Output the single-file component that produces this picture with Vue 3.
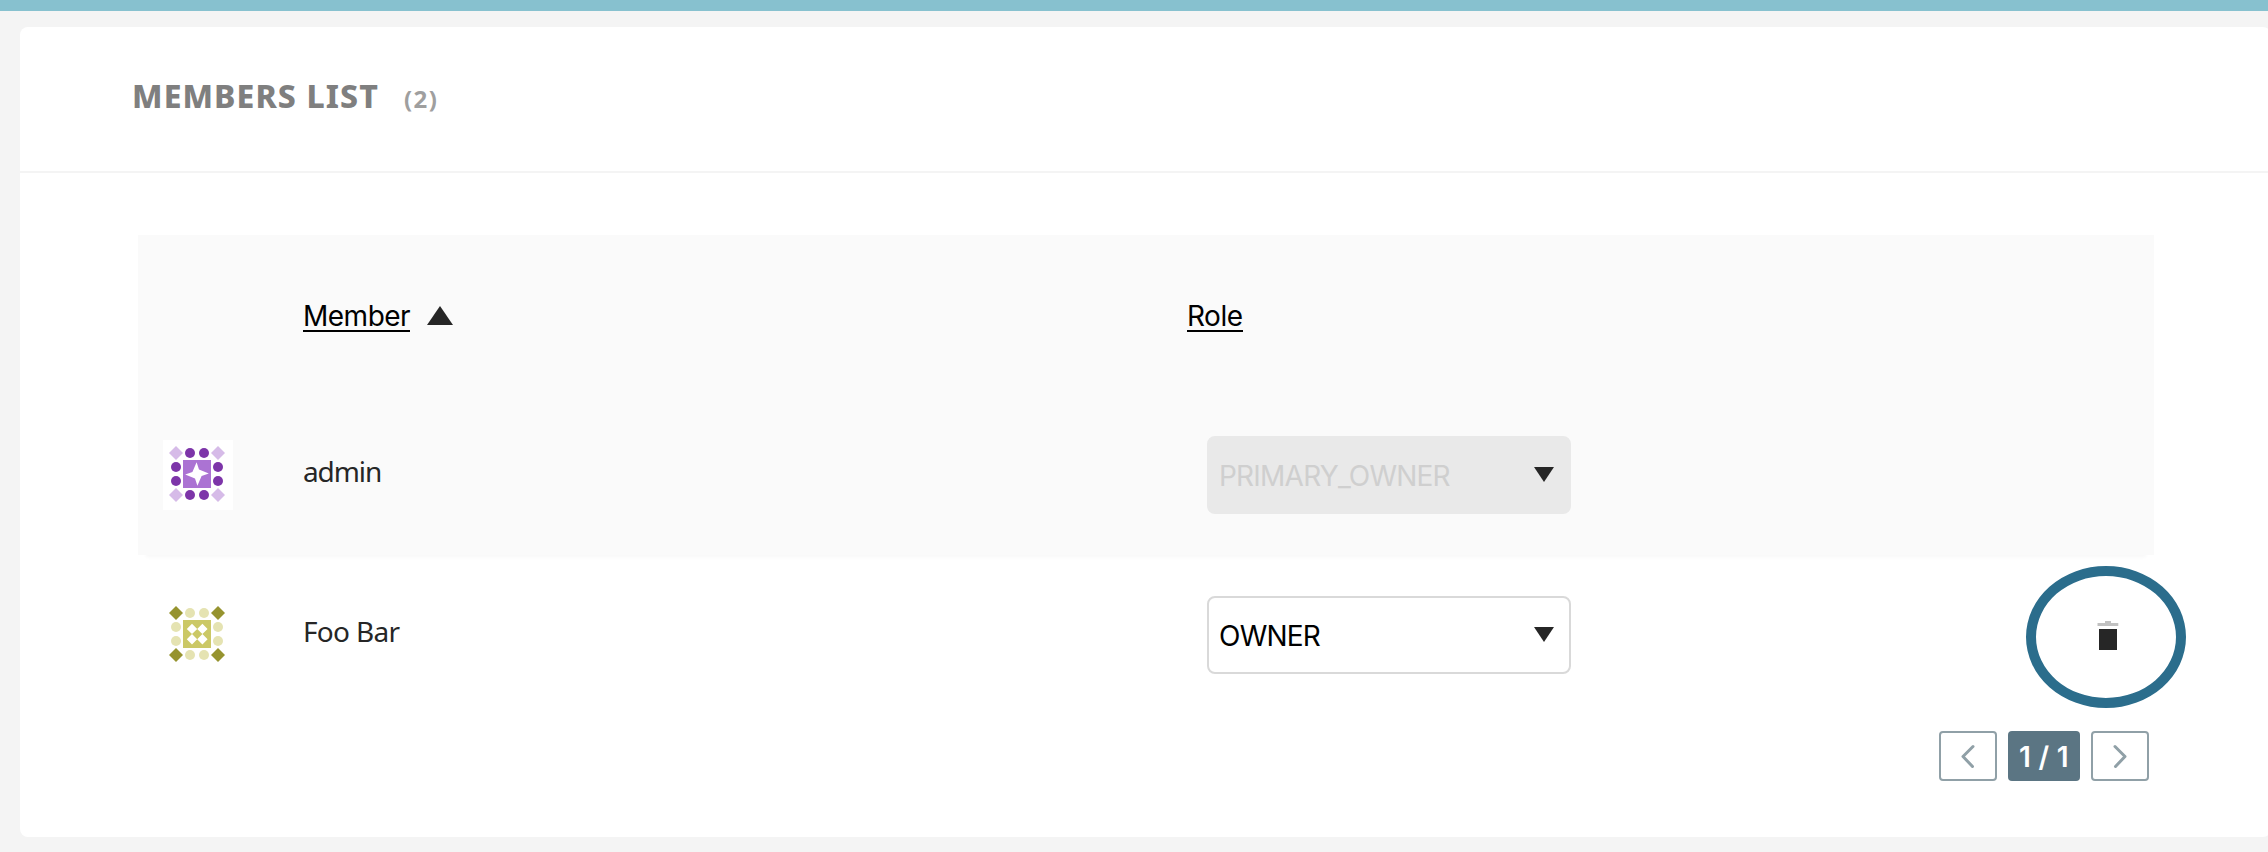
<script setup>
const corners = [[13, 13], [55, 13], [13, 55], [55, 55]]
const dots = [[27, 13], [41, 13], [27, 55], [41, 55], [13, 27], [13, 41], [55, 27], [55, 41]]
const members = [
  {
    name: 'admin', role: 'PRIMARY_OWNER', locked: true,
    corner: '#d6bbe8', dot: '#7d35a9', center: '#ab73d3',
    shape: 'M33.6 22.2 36 29.4 45.8 33.6 38.6 36 34.4 45.8 32 38.6 22.2 34.4 29.4 32Z',
  },
  {
    name: 'Foo Bar', role: 'OWNER', locked: false,
    corner: '#96932f', dot: '#e5e3b2', center: '#cbc866',
    shape: 'M29 23.700l5.200 5.200-5.200 5.200-5.200-5.200zM39.400 23.700l5.200 5.200-5.200 5.200-5.200-5.200zM29 34.100l5.200 5.200-5.200 5.200-5.200-5.200zM39.400 34.100l5.200 5.200-5.200 5.200-5.200-5.200z',
  },
]
</script>

<template>
  <div class="page">
    <div class="topbar"></div>
    <main class="card">
      <header class="card-header">
        <h1 class="title">MEMBERS LIST</h1>
        <span class="count">(2)</span>
      </header>
      <section class="table">
        <div class="row head">
          <div></div>
          <div class="sort">
            <a class="link member">Member</a>
            <svg class="up" width="26" height="19" viewBox="0 0 26 19"><path d="M0 19 13 0 26 19Z" fill="#262626" /></svg>
          </div>
          <div class="sort"><a class="link role">Role</a></div>
          <div></div>
        </div>
        <div v-for="m in members" :key="m.name" class="row" :class="{ shaded: m.locked }">
          <svg class="avatar" width="70" height="70" viewBox="0 0 70 70">
            <rect width="70" height="70" fill="#fff" />
            <path v-for="([x, y], i) in corners" :key="'c' + i" :d="`M${x} ${y - 7}l7 7-7 7-7-7z`" :fill="m.corner" />
            <circle v-for="([x, y], i) in dots" :key="'d' + i" :cx="x" :cy="y" r="5" :fill="m.dot" />
            <rect x="20" y="20" width="28" height="28" :fill="m.center" />
            <path :d="m.shape" fill="#fff" />
          </svg>
          <div class="name" :class="{ tight: m.locked }">{{ m.name }}</div>
          <div class="select" :class="{ locked: m.locked }">
            <span>{{ m.role }}</span>
            <svg width="20" height="15" viewBox="0 0 20 15"><path d="M0 0H20L10 15Z" fill="#262626" /></svg>
          </div>
          <div class="actions">
            <div v-if="!m.locked" class="ring">
              <svg width="22" height="29" viewBox="0 0 22 29">
                <path d="M8 0h6v2h7.3v3H.5V2H8z" fill="#c1c1c1" />
                <path d="M2 8h18v21H2z" fill="#262626" />
              </svg>
            </div>
          </div>
        </div>
      </section>
      <nav class="pager">
        <button class="btn"><svg width="58" height="50" viewBox="0 0 58 50"><path d="M34 15.500 24 25.500 33.500 35.500" /></svg></button>
        <span class="current">1 / 1</span>
        <button class="btn"><svg width="58" height="50" viewBox="0 0 58 50"><path d="M24 15.500 34 25.500 24.500 35.500" /></svg></button>
      </nav>
    </main>
  </div>
</template>

<style>
body { margin: 0; }
</style>

<style scoped>
.page {
  width: 2268px;
  height: 852px;
  overflow: hidden;
  background: #f4f4f4;
  font-family: Inter, "Liberation Sans", sans-serif;
  font-size: 28px;
  color: #262626;
}
.topbar { height: 11px; background: #87c1cf; }
.card {
  box-sizing: border-box;
  width: 2251px;
  height: 810px;
  margin: 16px 0 0 20px;
  background: #fff;
  border-radius: 8px;
}
.card-header {
  display: flex;
  align-items: baseline;
  box-sizing: border-box;
  height: 146px;
  padding: 45px 0 0 112px;
  border-bottom: 2px solid #f4f4f4;
  font-family: "Noto Sans", sans-serif;
  white-space: nowrap;
}
.title { margin: 0; width: 272px; font-size: 32px; font-weight: 800; line-height: 48px; letter-spacing: 1.1px; color: #7f7f7f; }
.count { font-size: 24px; font-weight: 700; letter-spacing: 1.4px; color: #9f9f9f; }
.table { width: 2016px; margin: 62px 0 0 118px; }
.row {
  display: grid;
  grid-template-columns: 165px 884px 380px 1fr;
  align-items: center;
  height: 160px;
}
.head, .shaded { background: #fafafa; }
.shaded { box-shadow: 0 10px 4px -8px rgba(0, 0, 0, .035); }
.sort { display: flex; align-items: center; height: 34px; }
.link { box-sizing: border-box; height: 34px; line-height: 36px; border-bottom: 2px solid #000; color: #000; letter-spacing: -.5px; white-space: nowrap; }
.member { width: 107px; }
.role { width: 56px; }
.up { margin-left: 17px; margin-top: 1px; }
.avatar { display: block; margin-left: 25px; }
.name { font-family: "Noto Sans", sans-serif; line-height: 40px; padding-bottom: 8px; letter-spacing: -.7px; }
.tight { letter-spacing: -1.1px; }
.select {
  display: flex;
  justify-content: space-between;
  align-items: center;
  box-sizing: border-box;
  width: 364px;
  height: 78px;
  margin-left: 20px;
  padding: 0 15px 2px 10px;
  border: 2px solid #d9d9d9;
  border-radius: 8px;
  background: #fff;
  color: #000;
  letter-spacing: -.78px;
}
.select span { position: relative; top: 2px; }
.locked { background: #e9e9e9; border-color: #e9e9e9; color: #cfcfcf; }
.actions { display: flex; justify-content: flex-end; }
.ring {
  display: flex;
  align-items: center;
  justify-content: center;
  box-sizing: border-box;
  width: 160px;
  height: 142px;
  margin: 4px -32px 0 0;
  padding: 0 0 3px 4px;
  border: 10px solid #2b6d8c;
  border-radius: 50%;
}
.pager { display: flex; justify-content: flex-end; gap: 11px; margin: 16px 122px 0 0; }
.btn { box-sizing: border-box; width: 58px; height: 50px; padding: 0; border: 2px solid #90a0a7; border-radius: 4px; background: #fff; overflow: hidden; }
.btn svg { display: block; margin: -2px; fill: none; stroke: #90a0a7; stroke-width: 3; stroke-linecap: round; stroke-linejoin: round; }
.current { width: 72px; height: 50px; border-radius: 4px; background: #5b7583; color: #fff; font-weight: 600; line-height: 52px; letter-spacing: .3px; text-align: center; white-space: nowrap; }
</style>
